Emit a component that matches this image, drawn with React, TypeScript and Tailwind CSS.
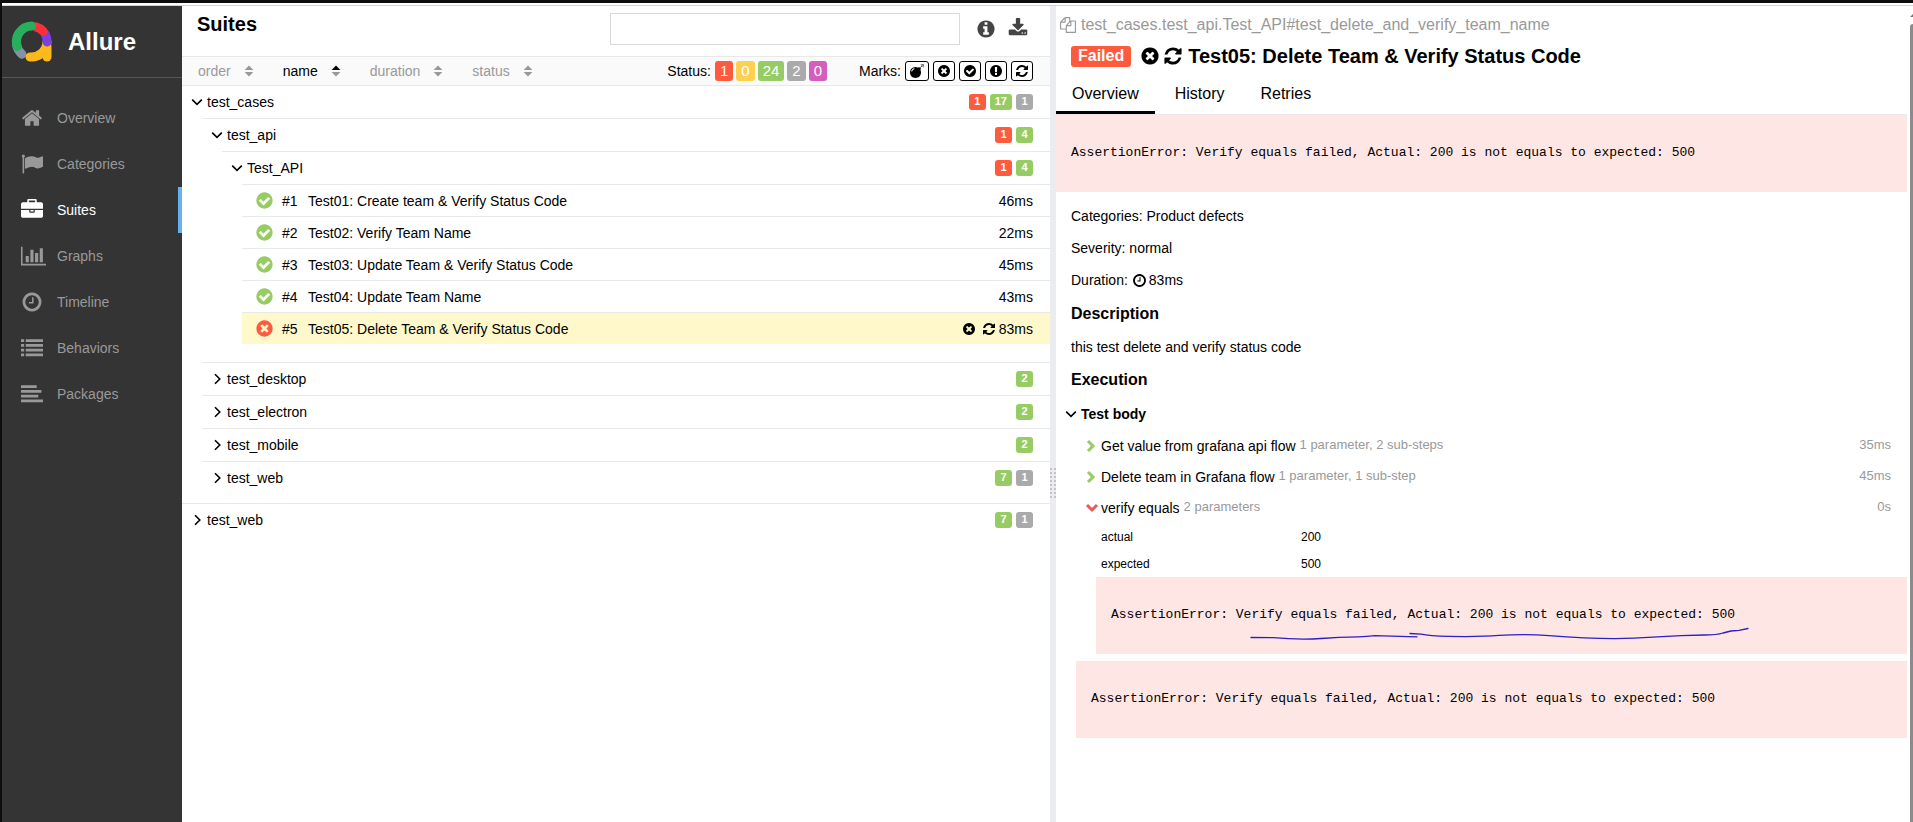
import type { ReactNode } from 'react';

const DISC =
  'q0 209-103 385.5t-279.5 279.5-385.5 103-385.5-103-279.5-279.5-103-385.5 103-385.5 279.5-279.5 385.5-103 385.5 103 279.5 279.5 103 385.5z';

const glyphs = {
  home: 'M1472 992v480q0 26-19 45t-45 19h-384v-384h-256v384h-384q-26 0-45-19t-19-45v-480q0-1 .5-3t.5-3l575-474 575 474q1 2 1 6zm223-69l-62 74q-8 9-21 11h-3q-13 0-21-7l-692-577-692 577q-12 8-24 7-13-2-21-11l-62-74q-8-10-7-23.5t11-21.5l719-599q32-26 76-26t76 26l244 204v-195q0-14 9-23t23-9h192q14 0 23 9t9 23v408l219 182q10 8 11 21.5t-7 23.5z',
  flag: 'M320 256q0 72-64 110v1266q0 13-9.5 22.5t-22.5 9.5h-64q-13 0-22.5-9.5t-9.5-22.5v-1266q-64-38-64-110 0-53 37.5-90.5t90.5-37.5 90.5 37.5 37.5 90.5zm1472 64v763q0 25-12.5 38.5t-39.5 27.5q-215 116-369 116-61 0-123.5-22t-108.5-48-115.5-48-142.5-22q-192 0-464 146-17 9-33 9-26 0-45-19t-19-45v-742q0-32 31-55 21-14 79-43 236-120 421-120 107 0 200 29t219 88q38 19 88 19 54 0 117.5-21t110-47 88-47 54.5-21q26 0 45 19t19 45z',
  briefcase:
    'M640 256h512v-128h-512v128zm1152 640v480q0 66-47 113t-113 47h-1472q-66 0-113-47t-47-113v-480h672v160q0 26 19 45t45 19h320q26 0 45-19t19-45v-160h672zm-768 0v128h-256v-128h256zm768-480v384h-1792v-384q0-66 47-113t113-47h352v-160q0-40 28-68t68-28h576q40 0 68 28t28 68v160h352q66 0 113 47t47 113z',
  chart:
    'M640 896v512h-256v-512h256zm384-512v1024h-256v-1024h256zm1024 1152v128h-2048v-1536h128v1408h1920zm-640-896v768h-256v-768h256zm384-384v1152h-256v-1152h256z',
  clock:
    'M1024 544v448q0 14-9 23t-23 9h-320q-14 0-23-9t-9-23v-64q0-14 9-23t23-9h224v-352q0-14 9-23t23-9h64q14 0 23 9t9 23zm416 352q0-148-73-273t-198-198-273-73-273 73-198 198-73 273 73 273 198 198 273 73 273-73 198-198 73-273zm224 0' + DISC,
  list: 'M0 192h256v224h-256zM384 192h1408v224h-1408zM0 576h256v224h-256zM384 576h1408v224h-1408zM0 960h256v224h-256zM384 960h1408v224h-1408zM0 1344h256v224h-256zM384 1344h1408v224h-1408z',
  alignLeft: 'M0 192h1280v224h-1280zM0 576h1664v224h-1664zM0 960h1408v224h-1408zM0 1344h1792v224h-1792z',
  info: 'M1152 1376v-160q0-14-9-23t-23-9h-96v-512q0-14-9-23t-23-9h-320q-14 0-23 9t-9 23v160q0 14 9 23t23 9h96v320h-96q-14 0-23 9t-9 23v160q0 14 9 23t23 9h448q14 0 23-9t9-23zm-128-896v-160q0-14-9-23t-23-9h-192q-14 0-23 9t-9 23v160q0 14 9 23t23 9h192q14 0 23-9t9-23zm640 416' + DISC,
  download:
    'M1344 1344q0-26-19-45t-45-19-45 19-19 45 19 45 45 19 45-19 19-45zm256 0q0-26-19-45t-45-19-45 19-19 45 19 45 45 19 45-19 19-45zm128-224v320q0 40-28 68t-68 28h-1472q-40 0-68-28t-28-68v-320q0-40 28-68t68-28h465l135 136q58 56 136 56t136-56l136-136h464q40 0 68 28t28 68zm-325-569q17 41-14 70l-448 448q-18 19-45 19t-45-19l-448-448q-31-29-14-70 17-39 59-39h256v-448q0-26 19-45t45-19h256q26 0 45 19t19 45v448h256q42 0 59 39z',
  bomb: 'M571 589q-10-25-34-35t-49 0q-108 44-191 127t-127 191q-10 25 0 49t35 34q13 5 24 5 42 0 60-40 34-84 98.5-148.5t148.5-98.5q25-11 35-35t0-49zm942-356l46 46-244 243 68 68q19 19 19 45.5t-19 45.5l-64 64q89 161 89 343 0 143-55.5 273.5t-150 225-225 150-273.5 55.5-273.5-55.5-225-150-150-225-55.5-273.5 55.5-273.5 150-225 225-150 273.5-55.5q182 0 343 89l64-64q19-19 45.5-19t45.5 19l68 68zm8-56q-10 10-22 10-13 0-23-10l-91-90q-9-10-9-23t9-23q10-9 23-9t23 9l90 91q10 9 10 22.5t-10 22.5zm230 230q-11 9-23 9t-23-9l-90-91q-10-9-10-22.5t10-22.5q9-10 22.5-10t22.5 10l91 90q9 10 9 23t-9 23zm41-183q0 14-9 23t-23 9h-96q-14 0-23-9t-9-23 9-23 23-9h96q14 0 23 9t9 23zm-192-192v96q0 14-9 23t-23 9-23-9-9-23v-96q0-14 9-23t23-9 23 9 9 23zm151 55l-91 90q-10 10-22 10-13 0-23-10-10-9-10-22.5t10-22.5l90-91q10-9 23-9t23 9q9 10 9 23t-9 23z',
  times:
    'M1277 1122q0-26-19-45l-181-181 181-181q19-19 19-45 0-27-19-46l-90-90q-19-19-46-19-26 0-45 19l-181 181-181-181q-19-19-45-19-27 0-46 19l-90 90q-19 19-19 46 0 26 19 45l181 181-181 181q-19 19-19 45 0 27 19 46l90 90q19 19 46 19 26 0 45-19l181-181 181 181q19 19 45 19 27 0 46-19l90-90q19-19 19-46zm387-226' + DISC,
  check:
    'M1412 734q0-28-18-46l-91-90q-19-19-45-19t-45 19l-408 407-226-226q-19-19-45-19t-45 19l-91 90q-18 18-18 46 0 27 18 45l362 362q19 19 45 19 27 0 46-19l543-543q18-18 18-45zm252 162' + DISC,
  exclamation:
    'M896 128q209 0 385.5 103t279.5 279.5 103 385.5-103 385.5-279.5 279.5-385.5 103-385.5-103-279.5-279.5-103-385.5 103-385.5 279.5-279.5 385.5-103zm128 1247v-190q0-14-9-23.5t-22-9.5h-192q-13 0-23 10t-10 23v190q0 13 10 23t23 10h192q13 0 22-9.5t9-23.5zm-2-344l18-621q0-12-10-18-10-8-24-8h-220q-14 0-24 8-10 6-10 18l17 621q0 10 10 17.5t24 7.5h185q14 0 23.5-7.5t10.5-17.5z',
  refresh:
    'M1639 1056q0 5-1 7-64 268-268 434.5t-478 166.5q-146 0-282.5-55t-243.5-157l-129 129q-19 19-45 19t-45-19-19-45v-448q0-26 19-45t45-19h448q26 0 45 19t19 45-19 45l-137 137q71 66 161 102t187 36q134 0 250-65t186-179q11-17 53-117 8-23 30-23h192q13 0 22.5 9.5t9.5 22.5zm25-800v448q0 26-19 45t-45 19h-448q-26 0-45-19t-19-45 19-45l138-138q-148-137-349-137-134 0-250 65t-186 179q-11 17-53 117-8 23-30 23h-199q-13 0-22.5-9.5t-9.5-22.5v-7q65-268 270-434.5t480-166.5q146 0 284 55.5t245 156.5l130-129q19-19 45-19t45 19 19 45z',
  copy: 'M1696 384q40 0 68 28t28 68v1216q0 40-28 68t-68 28h-960q-40 0-68-28t-28-68v-288h-544q-40 0-68-28t-28-68v-672q0-40 20-88t48-76l408-408q28-28 76-48t88-20h416q40 0 68 28t28 68v328q68-40 128-40h416zm-544 213l-299 299h299v-299zm-640-384l-299 299h299v-299zm196 647l316-316v-416h-384v416q0 40-28 68t-68 28h-416v640h512v-256q0-40 20-88t48-76zm956 804v-1152h-384v416q0 40-28 68t-68 28h-416v640h896z',
};

type Glyph = keyof typeof glyphs;

function Icon({ name, className = '' }: { name: Glyph; className?: string }) {
  return (
    <svg
      viewBox={name === 'chart' ? '0 0 2048 1792' : '0 0 1792 1792'}
      className={`shrink-0 fill-current ${className}`}
      aria-hidden="true"
    >
      <path d={glyphs[name]} />
    </svg>
  );
}

function Angle({ open, bold = false, className = '' }: { open: boolean; bold?: boolean; className?: string }) {
  const thin = open ? 'M1.2 3.6 L6 8.4 L10.8 3.6' : 'M4 1.2 L8.8 6 L4 10.8';
  const thick = open ? 'M1 3 L6 8 L11 3' : 'M2 1 L7 6 L2 11';
  return (
    <svg viewBox="0 0 12 12" className={`size-3 shrink-0 overflow-visible ${className}`} aria-hidden="true">
      <path d={bold ? thick : thin} fill="none" stroke="currentColor" strokeWidth={bold ? 3 : 1.6} />
    </svg>
  );
}

function Logo() {
  return (
    <svg viewBox="0 0 42 42" className="size-[42px] shrink-0" aria-hidden="true">
      <g fill="none" strokeWidth="9" strokeLinecap="round">
        <path d="M11 33.2A15.6 15.6 0 0 1 5.6 24" stroke="#8690a8" />
        <path d="M36 21A15.6 15.6 0 0 1 19 36" stroke="#fdb91c" />
        <path d="M36 26V36" stroke="#fdb91c" />
        <path d="M34.2 13A15.6 15.6 0 0 1 36 21" stroke="#7c3fe0" />
        <path d="M25 5.8A15.6 15.6 0 0 1 32.4 10.4" stroke="#f9303c" />
        <path d="M6.2 25.4A15.6 15.6 0 0 1 20.6 5" stroke="#27b05c" />
      </g>
    </svg>
  );
}

const navItems: { label: string; icon: Glyph; size: string }[] = [
  { label: 'Overview', icon: 'home', size: 'size-[22px]' },
  { label: 'Categories', icon: 'flag', size: 'size-[22px]' },
  { label: 'Suites', icon: 'briefcase', size: 'size-[22px]' },
  { label: 'Graphs', icon: 'chart', size: 'w-[25px] h-[22px]' },
  { label: 'Timeline', icon: 'clock', size: 'size-[22px]' },
  { label: 'Behaviors', icon: 'list', size: 'size-[22px]' },
  { label: 'Packages', icon: 'alignLeft', size: 'size-[22px]' },
];

function Sidebar() {
  return (
    <aside className="w-[180px] shrink-0 bg-[#343434]">
      <a href="#home" className="flex h-[72px] items-center gap-[15px] border-b border-[#555] pl-[9px] text-2xl font-bold text-white">
        <Logo />
        Allure
      </a>
      <nav className="pt-[17px]">
        {navItems.map(({ label, icon, size }) => {
          const active = label === 'Suites';
          return (
            <a
              key={label}
              href={`#${label.toLowerCase()}`}
              className={`flex h-[46px] items-center border-r-4 pl-[19px] ${
                active ? 'border-[#64b0f0] text-white' : 'border-transparent text-[#999]'
              }`}
            >
              <span className="flex w-9 items-center">
                <Icon name={icon} className={size} />
              </span>
              {label}
            </a>
          );
        })}
      </nav>
    </aside>
  );
}

type Tone = 'red' | 'yellow' | 'green' | 'gray' | 'purple';
const tones: Record<Tone, string> = {
  red: 'bg-[#fd5a3e]',
  yellow: 'bg-[#ffd050]',
  green: 'bg-[#97cc64]',
  gray: 'bg-[#aaa]',
  purple: 'bg-[#d35ebe]',
};

type Count = [Tone, number];

function Badges({ counts }: { counts: Count[] }) {
  return (
    <span className="ml-auto flex gap-1">
      {counts.map(([tone, n]) => (
        <span
          key={tone}
          className={`flex h-4 min-w-[17px] items-center justify-center rounded-[3px] px-[5px] text-[11px] font-bold text-white ${tones[tone]}`}
        >
          {n}
        </span>
      ))}
    </span>
  );
}

function Node({ name, counts, children }: { name: string; counts: Count[]; children?: ReactNode }) {
  return (
    <li>
      <button
        type="button"
        aria-expanded={Boolean(children)}
        className="flex h-[33px] w-full items-center border-t border-[#e8e8e8] pr-[17px] pl-[9px] text-left"
      >
        <Angle open={Boolean(children)} className="mr-1" />
        {name}
        <Badges counts={counts} />
      </button>
      {children && <ul className="ml-5 pb-[9px]">{children}</ul>}
    </li>
  );
}

const tests = [
  { name: 'Test01: Create team & Verify Status Code', time: '46ms', failed: false },
  { name: 'Test02: Verify Team Name', time: '22ms', failed: false },
  { name: 'Test03: Update Team & Verify Status Code', time: '45ms', failed: false },
  { name: 'Test04: Update Team Name', time: '43ms', failed: false },
  { name: 'Test05: Delete Team & Verify Status Code', time: '83ms', failed: true },
];

function Leaf({ index, name, time, failed }: { index: number; name: string; time: string; failed: boolean }) {
  return (
    <li>
      <a
        href={`#test-${index}`}
        className={`flex h-8 items-center border-t border-[#e8e8e8] pr-[17px] pl-[13px] ${failed ? 'bg-[#fff8cb]' : ''}`}
      >
        <Icon
          name={failed ? 'times' : 'check'}
          className={`mr-2 size-[19px] ${failed ? 'text-[#fd5a3e]' : 'text-[#97cc64]'}`}
        />
        <span className="w-[26px]">#{index}</span>
        <span>{name}</span>
        <span className="ml-auto flex items-center">
          {failed && (
            <>
              <Icon name="times" className="mr-[6px] size-[14px]" />
              <Icon name="refresh" className="mr-[3px] size-[14px]" />
            </>
          )}
          {time}
        </span>
      </a>
    </li>
  );
}

function SortArrows({ active }: { active: boolean }) {
  return (
    <svg viewBox="0 0 10 12" className="h-3 w-[10px]" aria-hidden="true">
      <path d="M5 .5 9.4 5H.6z" fill={active ? '#000' : '#999'} />
      <path d="M5 11.5 9.4 7H.6z" fill="#999" />
    </svg>
  );
}

const statusFilters: Count[] = [
  ['red', 1],
  ['yellow', 0],
  ['green', 24],
  ['gray', 2],
  ['purple', 0],
];
const marks: { icon: Glyph; label: string; width: string }[] = [
  { icon: 'bomb', label: 'Flaky', width: 'w-6' },
  { icon: 'times', label: 'New failed', width: 'w-[22px]' },
  { icon: 'check', label: 'New passed', width: 'w-[22px]' },
  { icon: 'exclamation', label: 'New broken', width: 'w-[22px]' },
  { icon: 'refresh', label: 'Retried', width: 'w-[22px]' },
];

function SuitesPane() {
  return (
    <section className="min-w-0 grow-[868] basis-0">
      <header className="flex h-[50px] items-start pt-[7px] pr-[22px] pl-[15px]">
        <h1 className="text-xl font-bold leading-[22px]">Suites</h1>
        <input
          type="search"
          aria-label="Search"
          className="ml-auto h-8 w-[350px] border border-[#d9d9d9] bg-white px-2 outline-none"
        />
        <button type="button" aria-label="Information" className="mt-[6px] ml-4 text-[#444]">
          <Icon name="info" className="size-5" />
        </button>
        <button type="button" aria-label="Download" className="mt-[5px] ml-3 text-[#444]">
          <Icon name="download" className="size-5" />
        </button>
      </header>
      <div className="flex h-[29px] items-center border-t border-[#e8e8e8] bg-[#fafafa] pr-[17px] pl-4">
        <div className="flex gap-[29px]">
          {['order', 'name', 'duration', 'status'].map((key) => (
            <button
              key={key}
              type="button"
              className={`flex items-center gap-[13px] ${key === 'name' ? 'text-black' : 'text-[#999]'}`}
            >
              {key}
              <SortArrows active={key === 'name'} />
            </button>
          ))}
        </div>
        <div className="ml-auto flex items-center gap-[3px]">
          <span className="mr-px">Status:</span>
          {statusFilters.map(([tone, n], i) => (
            <button
              key={i}
              type="button"
              className={`h-5 min-w-[18px] rounded-[3px] px-[5px] text-[15px] leading-5 text-white ${tones[tone]}`}
            >
              {n}
            </button>
          ))}
        </div>
        <div className="ml-8 flex items-center gap-1">
          <span>Marks:</span>
          {marks.map(({ icon, label, width }) => (
            <button
              key={label}
              type="button"
              aria-label={label}
              className={`flex h-5 items-center justify-center rounded-[3px] border border-black bg-white ${width}`}
            >
              <Icon name={icon} className="size-[14px]" />
            </button>
          ))}
        </div>
      </div>
      <ul>
        <Node name="test_cases" counts={[['red', 1], ['green', 17], ['gray', 1]]}>
          <Node name="test_api" counts={[['red', 1], ['green', 4]]}>
            <Node name="Test_API" counts={[['red', 1], ['green', 4]]}>
              {tests.map((test, i) => (
                <Leaf key={test.name} index={i + 1} {...test} />
              ))}
            </Node>
          </Node>
          <Node name="test_desktop" counts={[['green', 2]]} />
          <Node name="test_electron" counts={[['green', 2]]} />
          <Node name="test_mobile" counts={[['green', 2]]} />
          <Node name="test_web" counts={[['green', 7], ['gray', 1]]} />
        </Node>
        <Node name="test_web" counts={[['green', 7], ['gray', 1]]} />
      </ul>
    </section>
  );
}

function Gutter() {
  return (
    <div className="flex w-[6px] shrink-0 items-center justify-center bg-[#ebecef] pt-[138px]">
      <svg viewBox="0 0 6 32" className="h-8 w-[6px]" aria-hidden="true">
        {[0, 4, 8, 12, 16, 20, 24, 28].map((y) => (
          <g key={y} fill="#c4c4c4">
            <rect x="0" y={y + 1} width="2" height="2" />
            <rect x="4" y={y + 1} width="2" height="2" />
          </g>
        ))}
      </svg>
    </div>
  );
}

function ErrorTrace({ children }: { children?: ReactNode }) {
  return (
    <div className="relative flex h-[77px] items-center bg-[#fee6e5] px-[15px]">
      <pre className="font-['Liberation_Mono',monospace] text-[13px]">
        AssertionError: Verify equals failed, Actual: 200 is not equals to expected: 500
      </pre>
      {children}
    </div>
  );
}

function Underline() {
  return (
    <svg viewBox="0 0 500 14" className="absolute top-[50px] left-[153px] h-[14px] w-[500px]" aria-hidden="true">
      <g fill="none" stroke="#2c1fc4" strokeWidth="1.3" strokeLinecap="round" strokeLinejoin="round">
        <path d="M2 10.5L24 10.6Q50 13 72 11.5L90 10.4Q110 10 126 8.6L168 9.8" />
        <path d="M161 6.5L172 7.2Q180 9 200 9.4Q232 10 250 8.4Q276 6.6 300 8.6Q350 12.6 385 11.2L432 8.6L455 8Q468 8 474 6L482 4L490 3.4L499 1.5" />
      </g>
    </svg>
  );
}

function Step({ title, note, time, open = false }: { title: string; note: string; time: string; open?: boolean }) {
  return (
    <button type="button" aria-expanded={open} className="flex h-[31px] w-full items-center pr-4 pl-[30px] text-left">
      <Angle open={open} bold className={`mr-[3px] ${open ? 'text-[#e35d5b]' : 'text-[#97cc64]'}`} />
      {title}
      <span className="ml-1 text-[13px] text-[#999]">{note}</span>
      <span className="ml-auto text-[13px] text-[#999]">{time}</span>
    </button>
  );
}

function DetailsPane() {
  return (
    <section className="flex min-w-0 grow-[857] basis-0">
      <div className="min-w-0 flex-1 pr-px">
        <div className="flex h-[37px] items-center gap-[5px] pl-1 text-base text-[#999]">
          <Icon name="copy" className="size-4" />
          test_cases.test_api.Test_API#test_delete_and_verify_team_name
        </div>
        <h2 className="flex h-[26px] items-center pl-[15px] text-xl font-bold">
          <span className="mr-[9px] flex h-[21px] items-center rounded-[3px] bg-[#fd5a3e] px-[7px] text-base text-white">
            Failed
          </span>
          <Icon name="times" className="mr-[3px] size-5" />
          <Icon name="refresh" className="mr-[5px] size-5" />
          Test05: Delete Team &amp; Verify Status Code
        </h2>
        <div role="tablist" className="flex h-[46px] items-end gap-1 border-b border-[#e8e8e8] text-base">
          {['Overview', 'History', 'Retries'].map((tab, i) => (
            <button
              key={tab}
              type="button"
              role="tab"
              aria-selected={i === 0}
              className={`h-9 border-b-3 px-4 pb-px ${i === 0 ? 'border-black' : 'border-transparent'}`}
            >
              {tab}
            </button>
          ))}
        </div>
        <ErrorTrace />
        <div className="pt-2 pl-[15px]">
          <p className="flex h-8 items-center">Categories: Product defects</p>
          <p className="flex h-8 items-center">Severity: normal</p>
          <p className="flex h-8 items-center">
            Duration: <Icon name="clock" className="mr-[2px] ml-1 size-[15px]" />
            83ms
          </p>
          <h3 className="flex h-9 items-center text-base font-bold">Description</h3>
          <p className="flex h-[30px] items-center">this test delete and verify status code</p>
          <h3 className="flex h-9 items-center text-base font-bold">Execution</h3>
        </div>
        <button type="button" aria-expanded="true" className="flex h-8 items-center pl-[9px] font-bold">
          <Angle open className="mr-1" />
          Test body
        </button>
        <Step title="Get value from grafana api flow" note="1 parameter, 2 sub-steps" time="35ms" />
        <Step title="Delete team in Grafana flow" note="1 parameter, 1 sub-step" time="45ms" />
        <Step title="verify equals" note="2 parameters" time="0s" open />
        <table className="ml-[45px] text-left text-xs">
          <tbody>
            {[
              ['actual', '200'],
              ['expected', '500'],
            ].map(([key, value]) => (
              <tr key={key} className="h-[27px]">
                <th scope="row" className="w-[200px] font-normal">{key}</th>
                <td>{value}</td>
              </tr>
            ))}
          </tbody>
        </table>
        <div className="ml-10">
          <ErrorTrace>
            <Underline />
          </ErrorTrace>
        </div>
        <div className="mt-[7px] ml-5">
          <ErrorTrace />
        </div>
      </div>
      <div className="flex w-[5px] shrink-0 flex-col items-end" aria-hidden="true">
        <svg viewBox="0 0 3 3" className="mt-2 mb-[7px] h-[3px] w-[3px]">
          <path d="M0 3 3 0V3z" fill="#777" />
        </svg>
        <div className="w-[3px] flex-1 rounded-tl-[3px] bg-[#8b8b8b]" />
      </div>
    </section>
  );
}

export default function App() {
  return (
    <div className="flex min-h-screen flex-col border-t-3 border-l-2 border-[#0d0d0d] bg-white font-['Liberation_Sans',Arial,sans-serif] text-sm text-black">
      <div className="h-[3px] shrink-0 border-b border-[#d5d5d5]" />
      <div className="flex flex-1">
        <Sidebar />
        <SuitesPane />
        <Gutter />
        <DetailsPane />
      </div>
    </div>
  );
}
